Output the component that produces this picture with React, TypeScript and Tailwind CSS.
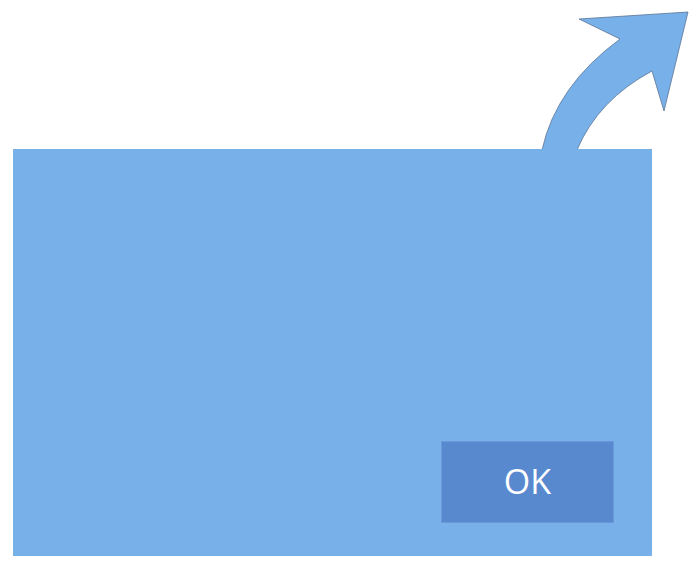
const Arrow = () => (
  <svg
    className="absolute left-0 top-0"
    width={700}
    height={571}
    viewBox="0 0 700 571"
  >
    <path
      d="M536 170 L542 150 Q556 86 620 39 L579 19 L688 12 L664 111 L652 71 Q598 100 577 150 L572 170 Z"
      fill="#78b1ea"
      stroke="#5a7396"
      strokeWidth={0.8}
      strokeLinejoin="miter"
    />
  </svg>
);

export default function App() {
  return (
    <div className="relative w-[700px] h-[571px] bg-white overflow-hidden">
      <Arrow />
      <div className="relative ml-[13px] mt-[149px] w-[639px] h-[407px] bg-[#78b1ea] flex items-end justify-end pr-[38px] pb-[33px]">
        <button
          className="w-[173px] h-[82px] bg-[#5889cf] border border-[#6b98d8] text-white text-[34px] leading-none pb-[3px] flex items-center justify-center"
          style={{ fontFamily: '"Open Sans", "Liberation Sans", sans-serif' }}
        >
          OK
        </button>
      </div>
    </div>
  );
}
